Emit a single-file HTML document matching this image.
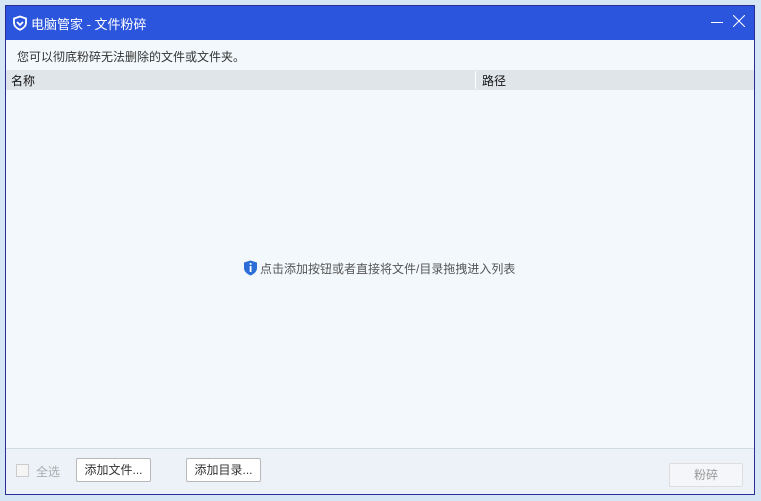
<!DOCTYPE html>
<html><head><meta charset="utf-8"><style>
*{margin:0;padding:0;box-sizing:border-box}
body{width:761px;height:501px;background:#d6e6f5;position:relative;overflow:hidden;font-family:"Liberation Sans","Noto Sans CJK SC",sans-serif;font-size:12px}
.win{position:absolute;left:5px;top:5px;width:750px;height:490px;border:1px solid #2a2d9a;background:#f3f8fc}
.title{position:absolute;left:0;top:0;width:748px;height:34px;background:#2c55de;color:#fff;font-size:13px}
.title span{position:absolute;left:25px;top:8px}
.sub{position:absolute;left:11px;top:42px;color:#333}
.hdr{position:absolute;left:0;top:64px;width:748px;height:20px;background:#e0e5e9;color:#111}
.foot{position:absolute;left:0;top:442px;width:748px;height:46px;background:#edf2f9;border-top:1px solid #d0dbe0}
.btn{position:absolute;height:24px;border:1px solid #b8b8b8;background:#fff;border-radius:2px;text-align:center;line-height:22px;color:#333}
</style></head><body>
<div class="win">
<div class="title">
<svg style="position:absolute;left:6px;top:9px" width="16" height="16" viewBox="0 0 16 16"><path d="M8 1.5 L14 3.5 L14 8 C14 11 11 13.5 8 14.8 C5 13.5 2 11 2 8 L2 3.5 Z" fill="none" stroke="#fff" stroke-width="1.8"/><path d="M5 7 L8 10 L11 7" fill="none" stroke="#fff" stroke-width="1.8"/></svg>
<span>电脑管家 - 文件粉碎</span>
<div style="position:absolute;left:705px;top:16px;width:12px;height:1px;background:#fff"></div>
<svg style="position:absolute;left:727px;top:9px" width="12" height="12"><path d="M0 0L12 12M12 0L0 12" stroke="#fff" stroke-width="1"/></svg>
</div>
<div class="sub">您可以彻底粉碎无法删除的文件或文件夹。</div>
<div class="hdr"><span style="position:absolute;left:5px;top:2px">名称</span><div style="position:absolute;left:469px;top:1px;width:1px;height:18px;background:#fff"></div><span style="position:absolute;left:476px;top:2px">路径</span></div>
<div style="position:absolute;left:237px;top:254px;color:#555;font-size:12px"><svg width="15" height="16" viewBox="0 0 15 16" style="vertical-align:-3px;margin-right:2px"><path d="M7.5 0.5 L14 2.5 L14 8 C14 11.5 11 14 7.5 15.5 C4 14 1 11.5 1 8 L1 2.5 Z" fill="#2b6fd6"/><rect x="6.7" y="6" width="1.8" height="6" fill="#fff"/><rect x="6.7" y="3" width="1.8" height="1.8" fill="#fff"/></svg>点击添加按钮或者直接将文件/目录拖拽进入列表</div>
<div class="foot">
<div style="position:absolute;left:10px;top:15px;width:13px;height:13px;border:1px solid #ccc;background:#f5f5f5"></div>
<span style="position:absolute;left:30px;top:14px;color:#aaa">全选</span>
<div class="btn" style="left:70px;top:9px;width:75px">添加文件...</div>
<div class="btn" style="left:180px;top:9px;width:75px">添加目录...</div>
<div class="btn" style="left:663px;top:14px;width:74px;color:#999;border-color:#ddd;background:#f4f6f9">粉碎</div>
</div>
</div>
</body></html>
